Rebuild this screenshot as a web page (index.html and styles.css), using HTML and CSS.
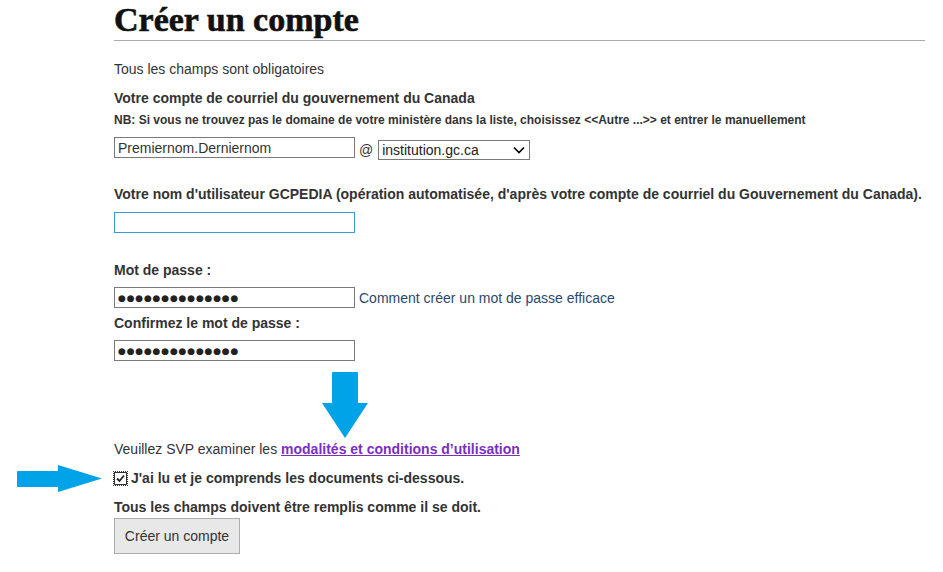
FILE: index.html
```html
<!DOCTYPE HTML>
<html>

<head>
    <meta charset="utf-8">
    <link rel="stylesheet" href="styles.css">
</head>

<body>
    <div id="page">
        <h1 class="title">Créer un compte</h1>

        <p class="intro">Tous les champs sont obligatoires</p>

        <p class="label label-email">Votre compte de courriel du gouvernement du Canada</p>
        <p class="note">NB: Si vous ne trouvez pas le domaine de votre ministère dans la liste, choisissez &lt;&lt;Autre ...&gt;&gt; et entrer le manuellement</p>

        <div class="email-row">
            <input class="field" type="text" value="Premiernom.Derniernom">
            <span class="at">@</span>
            <div class="select">
                <span>institution.gc.ca</span>
                <svg width="12" height="8" viewBox="0 0 12 8">
                    <path d="M1 1.5 L6 6.5 L11 1.5" fill="none" stroke="#000" stroke-width="1.6" />
                </svg>
            </div>
        </div>

        <p class="label label-user">Votre nom d'utilisateur GCPEDIA (opération automatisée, d'après votre compte de courriel du Gouvernement du Canada).</p>
        <input class="field field-focus" type="text" value="">

        <p class="label label-pass">Mot de passe :</p>
        <div class="pass-row">
            <input class="field field-pass" type="text" value="●●●●●●●●●●●●●●">
            <a class="help-link" href="#">Comment créer un mot de passe efficace</a>
        </div>

        <p class="label label-confirm">Confirmez le mot de passe :</p>
        <input class="field field-pass" type="text" value="●●●●●●●●●●●●●●">

        <p class="terms">Veuillez SVP examiner les <a class="terms-link" href="#">modalités et conditions d’utilisation</a></p>

        <label class="agree">
            <span class="check">
                <svg width="13" height="13" viewBox="0 0 13 13">
                    <rect x="0.5" y="0.5" width="12" height="12" fill="#fff" stroke="#333" />
                    <path d="M3 6.5 L5.5 9 L10 3.5" fill="none" stroke="#222" stroke-width="1.8" />
                </svg>
            </span>
            J'ai lu et je comprends les documents ci-dessous.
        </label>

        <p class="label label-warn">Tous les champs doivent être remplis comme il se doit.</p>
        <button class="submit" type="button">Créer un compte</button>

        <!-- annotation arrows -->
        <svg class="arrow arrow-down" width="48" height="67" viewBox="0 0 48 67">
            <path d="M11 1 Q11 0 12 0 L36 0 Q37 0 37 1 L37 31 L47 31 L24 66 L1 31 L11 31 Z" fill="#00a2e8" />
        </svg>
        <svg class="arrow arrow-right" width="86" height="29" viewBox="0 0 86 29">
            <path d="M1 7 Q0 7 0 8 L0 22 Q0 23 1 23 L41 23 L41 28 L85 14.5 L41 1 L41 7 Z" fill="#00a2e8" />
        </svg>
    </div>
</body>

</html>
```

FILE: styles.css
```css
body {
    margin: 0;
    background: #fff;
    font-family: "Liberation Sans", Arial, sans-serif;
    font-size: 14px;
    color: #333;
}

#page {
    position: relative;
    padding-left: 114px;
    width: 811px;
    height: 572px;
}

p {
    margin: 0;
    line-height: 18px;
}

.title {
    margin: 0;
    height: 40px;
    line-height: 40px;
    font-family: "Liberation Serif", "Times New Roman", serif;
    font-size: 34px;
    font-weight: bold;
    color: #111;
    -webkit-text-stroke: 0.6px #111;
    border-bottom: 1px solid #aaaaaa;
}

.intro {
    margin-top: 19px;
}

.label {
    font-weight: bold;
}

.label-email {
    margin-top: 11px;
}

.note {
    margin-top: 6px;
    font-size: 12px;
    line-height: 14px;
    font-weight: bold;
}

.email-row {
    display: flex;
    align-items: flex-start;
    margin-top: 10px;
}

.field {
    display: block;
    box-sizing: border-box;
    width: 241px;
    height: 21px;
    margin: 0;
    padding: 0 3px;
    border: 1px solid #7a7a7a;
    font-family: "Liberation Sans", Arial, sans-serif;
    font-size: 14px;
    color: #333;
    background: #fff;
    outline: none;
}

.field-focus {
    margin-top: 9px;
    border-color: #3c9ad8;
}

.field-pass {
    font-family: "DejaVu Sans", sans-serif;
    font-size: 9px;
    letter-spacing: 0.8px;
    color: #222;
}

.at {
    margin: 4px 5px 0 4px;
    line-height: 18px;
}

.select {
    display: flex;
    align-items: center;
    justify-content: space-between;
    box-sizing: border-box;
    width: 152px;
    height: 20px;
    margin-top: 3px;
    padding: 0 4px 0 3px;
    border: 1px solid #7a7a7a;
    color: #222;
}

.label-user {
    margin-top: 25px;
}

.label-pass {
    margin-top: 28px;
}

.pass-row {
    display: flex;
    align-items: center;
    margin-top: 8px;
}

.pass-row .field {
    margin-top: 0;
}

.help-link {
    margin-left: 4px;
    color: #284a6e;
    text-decoration: none;
}

.label-confirm {
    margin-top: 6px;
}

.label-confirm + .field {
    margin-top: 8px;
}

.terms {
    margin-top: 79px;
}

.terms-link {
    color: #7a2fc0;
    font-weight: bold;
    text-decoration: underline;
}

.agree {
    display: flex;
    align-items: center;
    margin-top: 11px;
    height: 18px;
    font-weight: bold;
}

.check {
    display: block;
    width: 13px;
    height: 13px;
    margin-right: 4px;
    outline: 1px dotted #333;
}

.check svg {
    display: block;
}

.label-warn {
    margin-top: 11px;
}

.submit {
    display: block;
    width: 126px;
    height: 36px;
    margin-top: 2px;
    padding: 0;
    background: #e8e8e8;
    border: 1px solid #adadad;
    border-radius: 0;
    font-family: "Liberation Sans", Arial, sans-serif;
    font-size: 14px;
    color: #333;
}

.arrow {
    position: absolute;
    display: block;
}

.arrow-down {
    left: 321px;
    top: 372px;
}

.arrow-right {
    left: 17px;
    top: 464px;
}
```
